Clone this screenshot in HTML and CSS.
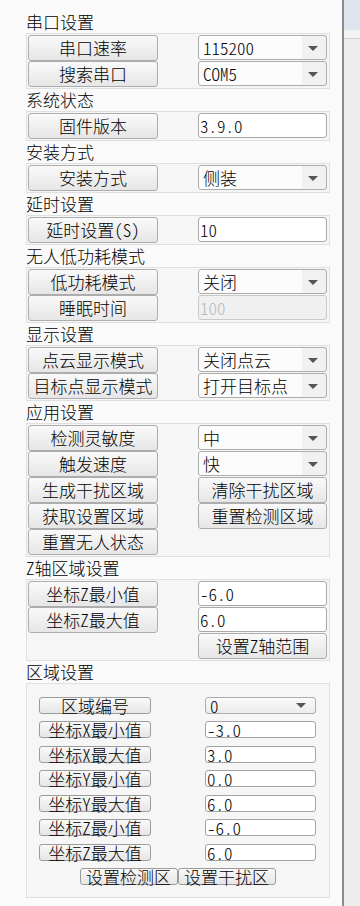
FILE: index.html
```html
<!DOCTYPE html>
<html lang="zh-CN">
<head>
<meta charset="utf-8">
<title>设置</title>
<link rel="stylesheet" href="styles.css">
</head>
<body>
<div class="app">
  <div class="panel">
    <div class="title">串口设置</div>
    <div class="box">
      <div class="btn">串口速率</div><div class="combo">115200</div>
      <div class="btn">搜索串口</div><div class="combo">COM5</div>
    </div>

    <div class="title">系统状态</div>
    <div class="box">
      <div class="btn">固件版本</div><div class="input">3.9.0</div>
    </div>

    <div class="title">安装方式</div>
    <div class="box">
      <div class="btn">安装方式</div><div class="combo">侧装</div>
    </div>

    <div class="title">延时设置</div>
    <div class="box">
      <div class="btn">延时设置(S)</div><div class="input">10</div>
    </div>

    <div class="title">无人低功耗模式</div>
    <div class="box">
      <div class="btn">低功耗模式</div><div class="combo">关闭</div>
      <div class="btn">睡眠时间</div><div class="input disabled">100</div>
    </div>

    <div class="title">显示设置</div>
    <div class="box">
      <div class="btn">点云显示模式</div><div class="combo">关闭点云</div>
      <div class="btn">目标点显示模式</div><div class="combo">打开目标点</div>
    </div>

    <div class="title">应用设置</div>
    <div class="box">
      <div class="btn">检测灵敏度</div><div class="combo">中</div>
      <div class="btn">触发速度</div><div class="combo">快</div>
      <div class="btn">生成干扰区域</div><div class="btn">清除干扰区域</div>
      <div class="btn">获取设置区域</div><div class="btn">重置检测区域</div>
      <div class="btn">重置无人状态</div><div></div>
    </div>

    <div class="title">Z轴区域设置</div>
    <div class="box">
      <div class="btn">坐标Z最小值</div><div class="input">-6.0</div>
      <div class="btn">坐标Z最大值</div><div class="input">6.0</div>
      <div></div><div class="btn">设置Z轴范围</div>
    </div>

    <div class="title">区域设置</div>
    <div class="box area">
      <div class="sbtn">区域编号</div><div class="scombo">0</div>
      <div class="sbtn">坐标X最小值</div><div class="sinput">-3.0</div>
      <div class="sbtn">坐标X最大值</div><div class="sinput">3.0</div>
      <div class="sbtn">坐标Y最小值</div><div class="sinput">0.0</div>
      <div class="sbtn">坐标Y最大值</div><div class="sinput">6.0</div>
      <div class="sbtn">坐标Z最小值</div><div class="sinput">-6.0</div>
      <div class="sbtn">坐标Z最大值</div><div class="sinput">6.0</div>
      <div class="foot"><div class="sbtn wide">设置检测区</div><div class="sbtn wide">设置干扰区</div></div>
    </div>
  </div>
  <div class="side">
    <div class="side-top"></div>
    <div class="side-band"></div>
    <div class="side-body"></div>
  </div>
</div>
</body>
</html>
```

FILE: styles.css
```css
* {
  box-sizing: border-box;
  margin: 0;
  padding: 0;
}

html, body {
  width: 360px;
  height: 906px;
  overflow: hidden;
}

body {
  font-family: "Noto Sans CJK SC", sans-serif;
  font-size: 17px;
  font-weight: 300;
  color: #000;
  background: #ebebeb;
  font-feature-settings: "hwid" 1;
}

.app {
  display: flex;
  height: 906px;
}

.panel {
  width: 344px;
  flex: none;
  border-right: 2px solid #8a8a8a;
  background: #fafafa;
  padding: 11px 0 0 26px;
}

.title {
  height: 22px;
  line-height: 21px;
  white-space: nowrap;
}

.box {
  width: 304px;
  border: 1px solid #e0e0e0;
  background: #f6f6f6;
  padding: 1px 2px 1px 1px;
  display: grid;
  grid-template-columns: 130px 129px;
  justify-content: space-between;
  grid-auto-rows: 26px;
}

.btn {
  height: 26px;
  border: 1px solid #adadad;
  border-radius: 3px;
  background: linear-gradient(#f9f9f9, #e6e6e6);
  text-align: center;
  line-height: 24px;
  white-space: nowrap;
}

.combo,
.input {
  height: 25px;
  border: 1px solid #adadad;
  border-radius: 3px;
  line-height: 23px;
  white-space: nowrap;
  position: relative;
}

.combo {
  padding-left: 4px;
  background: linear-gradient(to right, #fcfcfc calc(100% - 24px), #f1f1f1 calc(100% - 24px));
}

.combo::after {
  content: "";
  position: absolute;
  right: 8px;
  top: 10px;
  border-left: 5px solid transparent;
  border-right: 5px solid transparent;
  border-top: 5px solid #555;
}

.input {
  padding-left: 1px;
  background: #fff;
  border-color: #a9a9a9;
}

.input.disabled {
  background: #f0f0f0;
  border-color: #c9c9c9;
  color: #b8b8b8;
}

.box.area {
  height: 215px;
  grid-template-columns: 112px 111px;
  grid-auto-rows: 17px;
  row-gap: 7.43px;
  padding: 13px 13px 12px 12px;
}

.sbtn,
.scombo,
.sinput {
  height: 17px;
  border: 1px solid #9c9c9c;
  border-radius: 3px;
  line-height: 15px;
  white-space: nowrap;
  position: relative;
}

.sbtn {
  text-align: center;
  background: linear-gradient(#f9f9f9, #e6e6e6);
}

.scombo {
  padding-left: 4px;
  background: linear-gradient(#fafafa, #ececec);
  border-color: #acacac;
}

.scombo::after {
  content: "";
  position: absolute;
  right: 9px;
  top: 5px;
  border-left: 5px solid transparent;
  border-right: 5px solid transparent;
  border-top: 5px solid #555;
}

.sinput {
  background: #fff;
  padding-left: 1px;
  border-color: #a3a3a3;
}

.foot {
  grid-column: 1 / -1;
  display: flex;
  justify-content: center;
}

.sbtn.wide {
  width: 98px;
}

.side {
  flex: 1;
  display: flex;
  flex-direction: column;
}

.side-top {
  height: 30px;
  background: #dee4ed;
}

.side-band {
  height: 9px;
  background: #f3f3f3;
  border-bottom: 1px solid #cfcfcf;
}

.side-body {
  flex: 1;
  background: #ececec;
}
```
